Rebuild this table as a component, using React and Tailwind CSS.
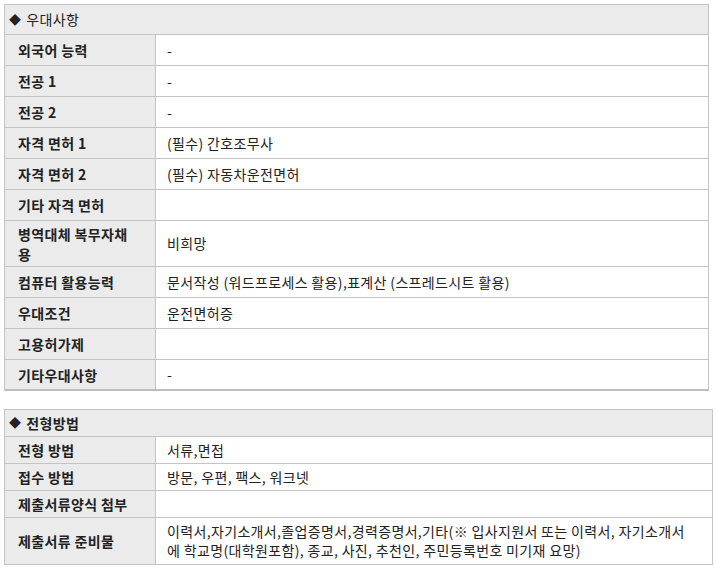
const prefs = [
  { label: "외국어 능력", value: "-" },
  { label: "전공 1", value: "-" },
  { label: "전공 2", value: "-" },
  { label: "자격 면허 1", value: "(필수) 간호조무사" },
  { label: "자격 면허 2", value: "(필수) 자동차운전면허" },
  { label: "기타 자격 면허", value: "" },
  { label: ["병역대체 복무자채", "용"], value: "비희망", tall: true },
  { label: "컴퓨터 활용능력", value: "문서작성 (워드프로세스 활용),표계산 (스프레드시트 활용)" },
  { label: "우대조건", value: "운전면허증" },
  { label: "고용허가제", value: "" },
  { label: "기타우대사항", value: "-" },
];

const methods = [
  { label: "전형 방법", value: "서류,면접" },
  { label: "접수 방법", value: "방문, 우편, 팩스, 워크넷" },
  { label: "제출서류양식 첨부", value: "" },
  {
    label: "제출서류 준비물",
    value: [
      "이력서,자기소개서,졸업증명서,경력증명서,기타(※ 입사지원서 또는 이력서, 자기소개서",
      "에 학교명(대학원포함), 종교, 사진, 추천인, 주민등록번호 미기재 요망)",
    ],
    tall: true,
  },
];

function Lines({ text }) {
  if (Array.isArray(text)) {
    return text.map((t, i) => (
      <span key={i} className="block whitespace-nowrap">
        {t}
      </span>
    ));
  }
  return text;
}

function Row({ row, h, tallH, lastH, last }) {
  return (
    <div
      className={`flex ${row.tall ? tallH : last ? lastH : h} ${last ? "" : "border-b border-[#c4c4c4]"}`}
    >
      <div className="w-[151px] shrink-0 bg-[#ebebeb] border-r border-[#c4c4c4] pl-[13px] pr-2 flex items-center font-bold leading-[20px]">
        <div>
          <Lines text={row.label} />
        </div>
      </div>
      <div className="flex-1 min-w-0 pl-[11px] pr-1 flex items-center leading-[19px]">
        <div>
          <Lines text={row.value} />
        </div>
      </div>
    </div>
  );
}

export default function App() {
  return (
    <div
      className="bg-white min-h-screen pt-[4px] pl-[4px] text-[14px] tracking-[0.35px] text-[#222]"
      style={{ fontFamily: '"Noto Sans CJK KR", "Noto Sans", sans-serif' }}
    >
      {/* 우대사항 */}
      <div className="w-[705px] border border-[#c4c4c4] border-b-2 border-b-[#bdbdbd]">
        <div className="h-[30px] bg-[#ebebeb] border-b border-[#c4c4c4] flex items-center pl-[4px]">
          <span className="text-[12px] mr-[5px]">◆</span>
          <span>우대사항</span>
        </div>
        {prefs.map((r, i) => (
          <Row
            key={i}
            row={r}
            h="h-[31px]"
            tallH="h-[46px]"
            lastH="h-[29px]"
            last={i === prefs.length - 1}
          />
        ))}
      </div>

      {/* 전형방법 */}
      <div className="w-[709px] mt-[18px] border border-[#c4c4c4]">
        <div className="h-[27px] bg-[#ebebeb] border-b border-[#c4c4c4] flex items-center pl-[4px] font-bold">
          <span className="text-[12px] mr-[5px]">◆</span>
          <span>전형방법</span>
        </div>
        {methods.map((r, i) => (
          <Row
            key={i}
            row={r}
            h="h-[27px]"
            tallH="h-[46px]"
            lastH="h-[46px]"
            last={i === methods.length - 1}
          />
        ))}
      </div>
    </div>
  );
}
